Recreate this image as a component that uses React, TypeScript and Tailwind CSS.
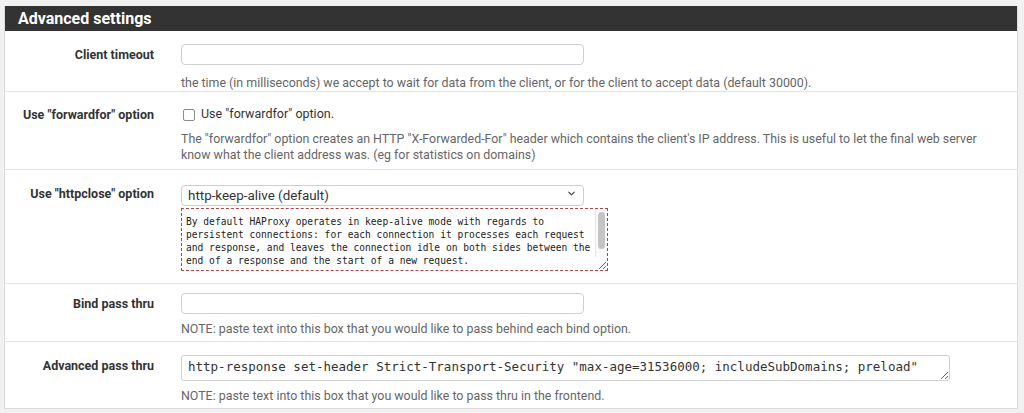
import { FC, ReactNode } from "react";
import { ChevronDown } from "lucide-react";

const keepAliveHelp =
  "By default HAProxy operates in keep-alive mode with regards to\n" +
  "persistent connections: for each connection it processes each request\n" +
  "and response, and leaves the connection idle on both sides between the\n" +
  "end of a response and the start of a new request.";

const Row: FC<{ label: string; pad: string; children: ReactNode; last?: boolean }> = ({
  label,
  pad,
  children,
  last,
}) => (
  <div className={`flex ${pad} ${last ? "" : "border-b border-[#e4e4e4]"}`}>
    <div className="w-[176px] shrink-0 pr-[27px] text-right text-[12.5px] font-bold leading-[21px] text-[#333]">
      {label}
    </div>
    <div className="w-[826px] flex flex-col">{children}</div>
  </div>
);

const Help: FC<{ mt: string; children: ReactNode }> = ({ mt, children }) => (
  <p className={`${mt} text-[12.4px] leading-[16px] text-[#666]`}>{children}</p>
);

const TextInput: FC = () => (
  <input
    type="text"
    className="w-[403px] h-[21px] rounded-[4px] border border-[#cfcfcf] bg-white px-2 text-[12px] outline-none"
  />
);

const App: FC = () => {
  return (
    <div
      className="min-h-screen bg-[#f1f1f1] pl-[4px] pt-[6px]"
      style={{ fontFamily: "Roboto, 'Liberation Sans', sans-serif" }}
    >
      <div className="w-[1014px] bg-white border border-[#dcdcdc] border-t-0">
        <div className="h-[25px] bg-[#333333] pl-[13px] flex items-center text-[16px] font-bold text-white">
          Advanced settings
        </div>

        <Row label="Client timeout" pad="pt-[13px] pb-0">
          <TextInput />
          <Help mt="mt-[10px]">
            the time (in milliseconds) we accept to wait for data from the client, or for the
            client to accept data (default 30000).
          </Help>
        </Row>

        <Row label='Use "forwardfor" option' pad="pt-[12px] pb-[6px]">
          <label className="flex items-center gap-[6px] h-[21px] text-[12.5px] text-[#333]">
            <input
              type="checkbox"
              className="appearance-none w-[12px] h-[12px] rounded-[2px] border border-[#8a8a8a] bg-white ml-[2px]"
            />
            Use "forwardfor" option.
          </label>
          <Help mt="mt-[6px]">
            The "forwardfor" option creates an HTTP "X-Forwarded-For" header which contains the
            client's IP address. This is useful to let the final web server
            <br />
            know what the client address was. (eg for statistics on domains)
          </Help>
        </Row>

        <Row label='Use "httpclose" option' pad="pt-[13px] pb-[12px]">
          <div className="relative w-[403px] h-[21px]">
            <select
              defaultValue="http-keep-alive"
              className="appearance-none w-full h-full rounded-[4px] border border-[#cfcfcf] bg-white pl-[6px] text-[13.4px] text-[#333] outline-none"
            >
              <option value="http-keep-alive">http-keep-alive (default)</option>
              <option value="http-tunnel">http-tunnel</option>
              <option value="httpclose">httpclose</option>
              <option value="http-server-close">http-server-close</option>
              <option value="forceclose">forceclose</option>
            </select>
            <ChevronDown
              size={11}
              strokeWidth={2.5}
              className="pointer-events-none absolute right-[7px] top-[5px] text-[#444]"
            />
          </div>
          <div className="relative mt-[4px] w-[427px] h-[63px]">
            <textarea
              readOnly
              value={keepAliveHelp}
              wrap="off"
              className="block w-full h-full border border-dashed border-[#a8484b] bg-white pl-[4px] pt-[6px] pr-[14px] text-[9.6px] leading-[13px] text-[#222] outline-none overflow-hidden"
              style={{ fontFamily: "'DejaVu Sans Mono', monospace" }}
            />
            {/* scrollbar track + thumb drawn over the textarea edge */}
            <div className="pointer-events-none absolute right-[1px] top-[1px] bottom-[14px] w-[12px] border-l border-[#e6e6e6] bg-[#fafafa] flex justify-center pt-[3px]">
              <div className="w-[7px] h-[37px] rounded-full bg-[#c4c4c4]" />
            </div>
          </div>
        </Row>

        <Row label="Bind pass thru" pad="pt-[9px] pb-[4px]">
          <TextInput />
          <Help mt="mt-[7px]">
            NOTE: paste text into this box that you would like to pass behind each bind option.
          </Help>
        </Row>

        <Row label="Advanced pass thru" pad="pt-[13px] pb-[4px]" last>
          <textarea
            readOnly
            value={'http-response set-header Strict-Transport-Security "max-age=31536000; includeSubDomains; preload"'}
            className="w-[769px] h-[26px] rounded-[3px] border border-[#cfcfcf] bg-white pl-[6px] pt-[2px] text-[12.5px] leading-[18px] text-[#333] outline-none overflow-hidden"
            style={{ fontFamily: "'DejaVu Sans Mono', monospace" }}
          />
          <Help mt="mt-[7px]">
            NOTE: paste text into this box that you would like to pass thru in the frontend.
          </Help>
        </Row>
      </div>
    </div>
  );
};

export default App;
